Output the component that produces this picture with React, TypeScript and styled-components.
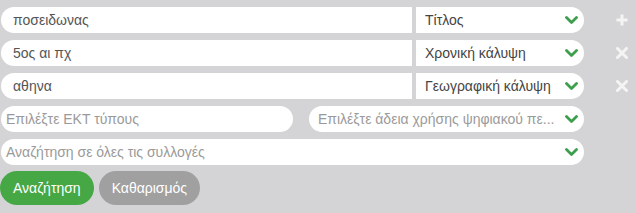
import React from 'react';
import styled, { createGlobalStyle } from 'styled-components';

const GlobalStyle = createGlobalStyle`
  html, body {
    margin: 0;
    padding: 0;
    background: #d4d4d6;
    font-family: "Liberation Sans", Arial, sans-serif;
  }
`;

// Styles
const Form = styled.div`
  width: 636px;
  height: 213px;
  box-sizing: border-box;
  padding: 7px 0 0 1px;
  display: flex;
  flex-direction: column;
  gap: 7px;
`;

const Row = styled.div`
  display: flex;
  align-items: center;
`;

const Fields = styled.div<{ $gap?: number }>`
  width: 583px;
  display: flex;
  gap: ${(p) => p.$gap ?? 4}px;
`;

const TextInput = styled.input<{ $round?: boolean; $pad?: number }>`
  flex: 1;
  min-width: 0;
  height: 26px;
  box-sizing: border-box;
  border: none;
  outline: none;
  background: #fff;
  border-radius: ${(p) => (p.$round ? '13px' : '13px 0 0 13px')};
  padding: 0 8px 0 ${(p) => p.$pad ?? 12}px;
  font-family: inherit;
  font-size: 14px;
  color: #555;

  &::placeholder {
    color: #9a9a9a;
  }
`;

const Select = styled.div<{ $w: number; $round?: boolean; $placeholder?: boolean; $pad?: number }>`
  width: ${(p) => p.$w}px;
  flex: none;
  height: 26px;
  box-sizing: border-box;
  background: #fff;
  border-radius: ${(p) => (p.$round ? '13px' : '0 13px 13px 0')};
  padding: 0 6px 0 ${(p) => p.$pad ?? 9}px;
  display: flex;
  align-items: center;
  gap: 6px;
  font-size: 14px;
  color: ${(p) => (p.$placeholder ? '#9a9a9a' : '#444')};

  span {
    flex: 1;
    min-width: 0;
    white-space: nowrap;
  }
`;

const IconSlot = styled.div`
  width: 22px;
  margin-left: 27px;
  display: flex;
  justify-content: center;
  align-items: center;
`;

const Buttons = styled.div`
  display: flex;
  gap: 5px;
  margin-top: -1px;
  margin-left: -1px;
`;

const Button = styled.button<{ $color: string }>`
  height: 34px;
  border: none;
  border-radius: 17px;
  padding: 0 13px;
  background: ${(p) => p.$color};
  color: #fff;
  font-family: inherit;
  font-size: 14px;
  cursor: pointer;
`;

const Chevron = () => (
  <svg width="13" height="9" viewBox="0 0 13 9">
    <path d="M1.5 1.5 L6.5 6.5 L11.5 1.5" fill="none" stroke="#3d9f4b" strokeWidth="2.8" strokeLinecap="round" strokeLinejoin="round" />
  </svg>
);

const Plus = () => (
  <svg width="12" height="12" viewBox="0 0 12 12">
    <path d="M6 0.5 V11.5 M0.5 6 H11.5" stroke="#f4f4f4" strokeWidth="3" />
  </svg>
);

const Cross = () => (
  <svg width="12" height="12" viewBox="0 0 12 12">
    <path d="M1.5 1.5 L10.5 10.5 M10.5 1.5 L1.5 10.5" stroke="#f4f4f4" strokeWidth="3" strokeLinecap="round" />
  </svg>
);

const criteria = [
  { value: 'ποσειδωνας', field: 'Τίτλος', icon: <Plus /> },
  { value: '5ος αι πχ', field: 'Χρονική κάλυψη', icon: <Cross /> },
  { value: 'αθηνα', field: 'Γεωγραφική κάλυψη', icon: <Cross /> },
];

const App: React.FC = () => {
  return (
    <>
      <GlobalStyle />
      <Form>
        {criteria.map((c) => (
          <Row key={c.field}>
            <Fields>
              <TextInput defaultValue={c.value} />
              <Select $w={168}>
                <span>{c.field}</span>
                <Chevron />
              </Select>
            </Fields>
            <IconSlot>{c.icon}</IconSlot>
          </Row>
        ))}

        <Row>
          <Fields $gap={16}>
            <TextInput $round $pad={5} placeholder="Επιλέξτε ΕΚΤ τύπους" />
            <Select $w={275} $round $placeholder>
              <span>Επιλέξτε άδεια χρήσης ψηφιακού πε...</span>
              <Chevron />
            </Select>
          </Fields>
        </Row>

        <Row>
          <Fields>
            <Select $w={583} $round $placeholder $pad={5}>
              <span>Αναζήτηση σε όλες τις συλλογές</span>
              <Chevron />
            </Select>
          </Fields>
        </Row>

        <Buttons>
          <Button $color="#45a845">Αναζήτηση</Button>
          <Button $color="#a0a0a0">Καθαρισμός</Button>
        </Buttons>
      </Form>
    </>
  );
};

export default App;
